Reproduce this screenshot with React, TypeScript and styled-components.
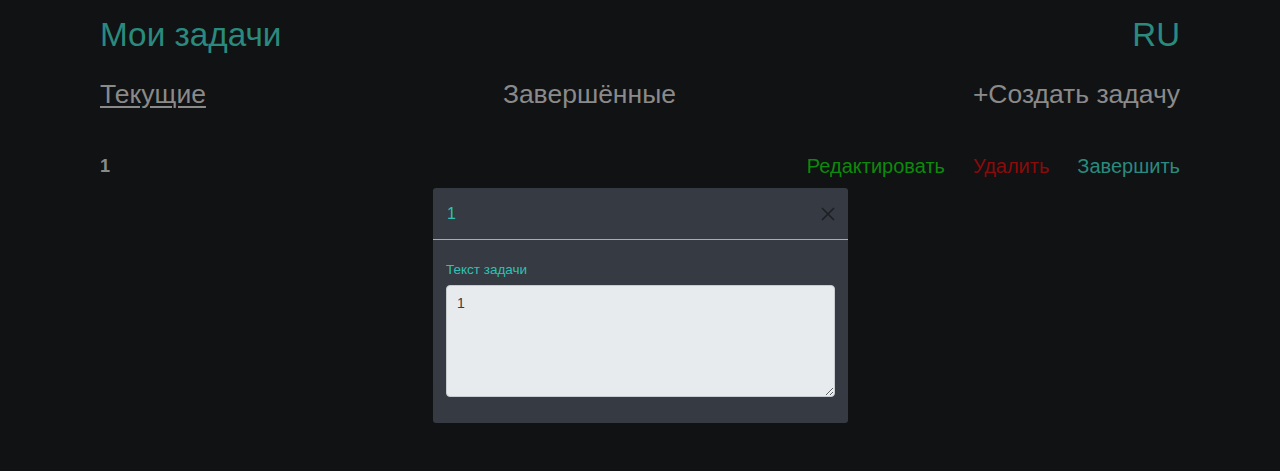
import React, { useState } from 'react';
import styled, { createGlobalStyle } from 'styled-components';

function App() {
  const [text, setText] = useState('1');

  return (
    <Page>
      <GlobalStyle />
      <Container>
        <Header>
          <Title>Мои задачи</Title>
          <Lang>RU</Lang>
        </Header>
        <Tabs>
          <Tab active>Текущие</Tab>
          <Tab>Завершённые</Tab>
          <Tab>+Создать задачу</Tab>
        </Tabs>
        <TaskRow>
          <TaskName>1</TaskName>
          <Actions>
            <Action color="#0b8a0b">Редактировать</Action>
            <Action color="#8b0a0a">Удалить</Action>
            <Action color="#2a8a7e">Завершить</Action>
          </Actions>
        </TaskRow>
      </Container>
      <Modal>
        <ModalHeader>
          <ModalTitle>1</ModalTitle>
          <CloseButton aria-label="close">
            <svg width="16" height="16" viewBox="0 0 16 16">
              <path d="M2 2 L14 14 M14 2 L2 14" stroke="#1c1f23" strokeWidth="1.6" />
            </svg>
          </CloseButton>
        </ModalHeader>
        <ModalBody>
          <Label>Текст задачи</Label>
          <TextArea value={text} onChange={(e) => setText(e.target.value)} />
        </ModalBody>
      </Modal>
    </Page>
  );
}

export default App;

const Page = styled.main`
  width: 100%;
  min-height: 100vh;
  position: relative;
  background: #111214;
`;
const Container = styled.div`
  width: 1080px;
  margin: 0 auto;
  padding-top: 15px;
`;
const Header = styled.header`
  display: flex;
  justify-content: space-between;
  align-items: center;
  height: 40px;
`;
const Title = styled.h1`
  font-size: 33.3px;
  font-weight: 400;
  color: #2a8a7e;
`;
const Lang = styled.span`
  font-size: 33px;
  color: #2a8a7e;
`;
const Tabs = styled.nav`
  display: flex;
  justify-content: space-between;
  align-items: center;
  margin-top: 20px;
  height: 38px;
`;
const Tab = styled.a<{ active?: boolean }>`
  font-size: 26.5px;
  color: #8a8a8a;
  cursor: pointer;
  text-decoration: ${(p) => (p.active ? 'underline' : 'none')};
  text-underline-offset: 3px;
  text-decoration-thickness: 2px;
`;
const TaskRow = styled.div`
  display: flex;
  justify-content: space-between;
  align-items: center;
  margin-top: 40px;
  height: 26px;
`;
const TaskName = styled.span`
  font-size: 18px;
  font-weight: 700;
  color: #8a8a8a;
`;
const Actions = styled.div`
  display: flex;
  gap: 28px;
`;
const Action = styled.span<{ color: string }>`
  font-size: 20px;
  color: ${(p) => p.color};
  cursor: pointer;
`;
const Modal = styled.div`
  position: absolute;
  left: 433px;
  top: 188px;
  width: 415px;
  background: #363a42;
  border-radius: 3px;
  padding-bottom: 26px;
`;
const ModalHeader = styled.div`
  display: flex;
  justify-content: space-between;
  align-items: center;
  height: 52px;
  padding: 0 12px 0 14px;
  border-bottom: 1px solid #a9adb3;
`;
const ModalTitle = styled.span`
  font-size: 16px;
  color: #2fc1b3;
`;
const CloseButton = styled.button`
  background: none;
  border: none;
  padding: 0;
  width: 16px;
  height: 16px;
  cursor: pointer;
  display: flex;
`;
const ModalBody = styled.div`
  padding: 22px 13px 0 13px;
  display: flex;
  flex-direction: column;
`;
const Label = styled.label`
  font-size: 13.5px;
  color: #2fc1b3;
  margin-bottom: 8px;
`;
const TextArea = styled.textarea`
  height: 112px;
  background: #e8ebee;
  border: 1px solid #c8ccd0;
  border-radius: 4px;
  padding: 9px 10px;
  font-family: 'Liberation Sans', Arial, sans-serif;
  font-size: 14px;
  color: #3a3d42;
  resize: vertical;
  outline: none;
`;
const GlobalStyle = createGlobalStyle`
*,
*::before,
*::after {
  margin: 0;
  padding: 0;
  box-sizing: border-box;
}
body {
  font-family: 'Liberation Sans', Arial, sans-serif;
  background: #111214;
}
`;
